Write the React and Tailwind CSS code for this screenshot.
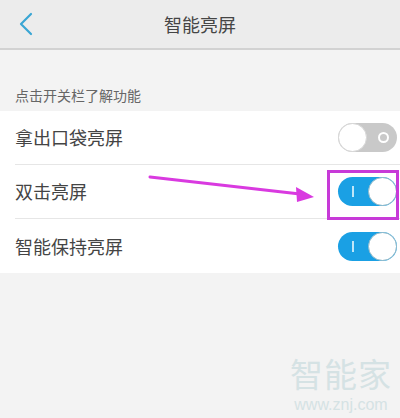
import React from 'react';

const Toggle = ({ on }) => {
  if (on) {
    return (
      <div className="relative h-[29px] w-[59px] rounded-full bg-[#1aa0e4]">
        <div className="absolute left-[14px] top-[9px] h-[11px] w-[2px] bg-[#bfe6f8]" />
        <div className="absolute right-0 top-0 h-[29px] w-[29px] rounded-full border border-[#8fb8c8] bg-white" />
      </div>
    );
  }
  return (
    <div className="relative h-[29px] w-[59px] rounded-full bg-[#c9c9c9]">
      <div className="absolute left-0 top-0 h-[29px] w-[29px] rounded-full border border-[#d6d6d6] bg-white" />
      <div className="absolute right-[8px] top-[9px] h-[11px] w-[11px] rounded-full border-2 border-white" />
    </div>
  );
};

const Row = ({ label, on, last }) => (
  <div className="flex h-[54px] items-center pl-[15px]">
    <div className={`flex h-full flex-1 items-center justify-between pr-[3px] ${last ? '' : 'border-b border-[#e6e6e6]'}`}>
      <span className="text-[18px] text-[#444]">{label}</span>
      <Toggle on={on} />
    </div>
  </div>
);

export default function App() {
  return (
    <div
      className="relative h-[418px] w-[400px] overflow-hidden bg-[#f3f3f3]"
      style={{ fontFamily: '"Noto Sans CJK SC", "Noto Sans", sans-serif' }}
    >
      <header className="relative flex h-[50px] items-center justify-center border-b-2 border-[#d2d2d2] bg-[#ececec]">
        <svg className="absolute left-[17px] top-[12px]" width="18" height="24" viewBox="0 0 18 24">
          <path d="M14 2 L4 12 L14 22" fill="none" stroke="#3aa6d4" strokeWidth="2.2" strokeLinecap="round" strokeLinejoin="round" />
        </svg>
        <span className="text-[18px] text-[#454545]">智能亮屏</span>
      </header>

      <div className="flex h-[61px] items-end pb-[5px] pl-[15px]">
        <span className="text-[14px] text-[#666]">点击开关栏了解功能</span>
      </div>

      <div className="bg-white">
        <Row label="拿出口袋亮屏" on={false} />
        <Row label="双击亮屏" on />
        <Row label="智能保持亮屏" on last />
      </div>

      {/* annotation overlay */}
      <div className="absolute left-[327px] top-[170px] h-[50px] w-[72px] border-[3px] border-[#c73ad8]" />
      <svg className="absolute left-0 top-0" width="400" height="418" viewBox="0 0 400 418">
        <line x1="150" y1="177" x2="300" y2="194" stroke="#d93ae0" strokeWidth="3" strokeLinecap="round" />
        <polygon points="314,197 296,187 297,202" fill="#d93ae0" />
      </svg>

      <div className="absolute left-[290px] top-[354px] flex flex-col items-center">
        <span className="text-[33px] leading-[38px] tracking-[1px] text-[#d5e2e4]">智能家</span>
        <span className="mt-[4px] text-[16px] leading-[18px] text-[#d5e2e4]" style={{ fontFamily: '"Liberation Sans", sans-serif' }}>www.znj.com</span>
      </div>
    </div>
  );
}
